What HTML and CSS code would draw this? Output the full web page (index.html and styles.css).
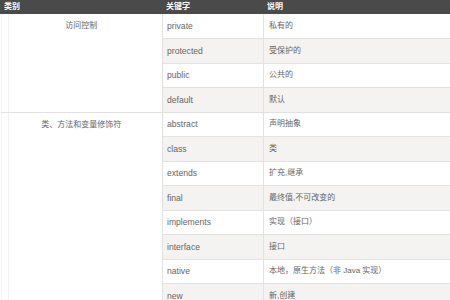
FILE: index.html
```html
<!DOCTYPE html>
<html lang="zh">
<head>
<meta charset="utf-8">
<link rel="stylesheet" href="styles.css">
</head>
<body>
<table class="kw">
  <colgroup><col class="c1"><col class="c2"><col class="c3"></colgroup>
  <thead>
    <tr><th>类别</th><th>关键字</th><th>说明</th></tr>
  </thead>
  <tbody>
    <tr><td class="cat" rowspan="4">访问控制</td><td class="key">private</td><td class="desc">私有的</td></tr>
    <tr class="alt"><td class="key">protected</td><td class="desc">受保护的</td></tr>
    <tr><td class="key">public</td><td class="desc">公共的</td></tr>
    <tr class="alt"><td class="key">default</td><td class="desc">默认</td></tr>
    <tr><td class="cat" rowspan="8">类、方法和变量修饰符</td><td class="key">abstract</td><td class="desc">声明抽象</td></tr>
    <tr class="alt"><td class="key">class</td><td class="desc">类</td></tr>
    <tr><td class="key">extends</td><td class="desc">扩充,继承</td></tr>
    <tr class="alt"><td class="key">final</td><td class="desc">最终值,不可改变的</td></tr>
    <tr><td class="key">implements</td><td class="desc">实现（接口）</td></tr>
    <tr class="alt"><td class="key">interface</td><td class="desc">接口</td></tr>
    <tr><td class="key">native</td><td class="desc">本地，原生方法（非 Java 实现）</td></tr>
    <tr class="alt"><td class="key">new</td><td class="desc">新,创建</td></tr>
  </tbody>
</table>
</body>
</html>
```
FILE: styles.css
```css
html, body {
  margin: 0;
  padding: 0;
  background: #fff;
}
body {
  font-family: "Liberation Sans", "Noto Sans CJK SC", sans-serif;
  font-size: 8px;
  color: #666;
  overflow: hidden;
}
.kw {
  width: 450px;
  table-layout: fixed;
  border-collapse: collapse;
}
.c1 { width: 162px; }
.c2 { width: 101px; }
.kw th {
  background: #4a4a4a;
  color: #fff;
  font-weight: bold;
  text-align: left;
  height: 14px;
  padding: 0 3px;
  line-height: 12px;
  border-left: 1px solid #4a4a4a;
}
.kw td {
  height: 24.5px;
  box-sizing: border-box;
  padding: 0 4px;
  line-height: 12px;
  vertical-align: middle;
  border: 1px solid #e2e2e0;
  border-top: none;
  white-space: nowrap;
}
.kw tr.alt td { background: #f4f3f1; }
.kw td.key { font-size: 8.6px; }
.kw td.desc {
  padding-left: 5px;
  border-right: none;
}
.kw td.cat {
  vertical-align: top;
  text-align: center;
  padding-top: 6px;
  border-left: none;
  background: linear-gradient(to right, #f6f6f6 0 1px, #fff 1px 7px, #f0f0f0 7px 8px, #fff 8px);
}
```
